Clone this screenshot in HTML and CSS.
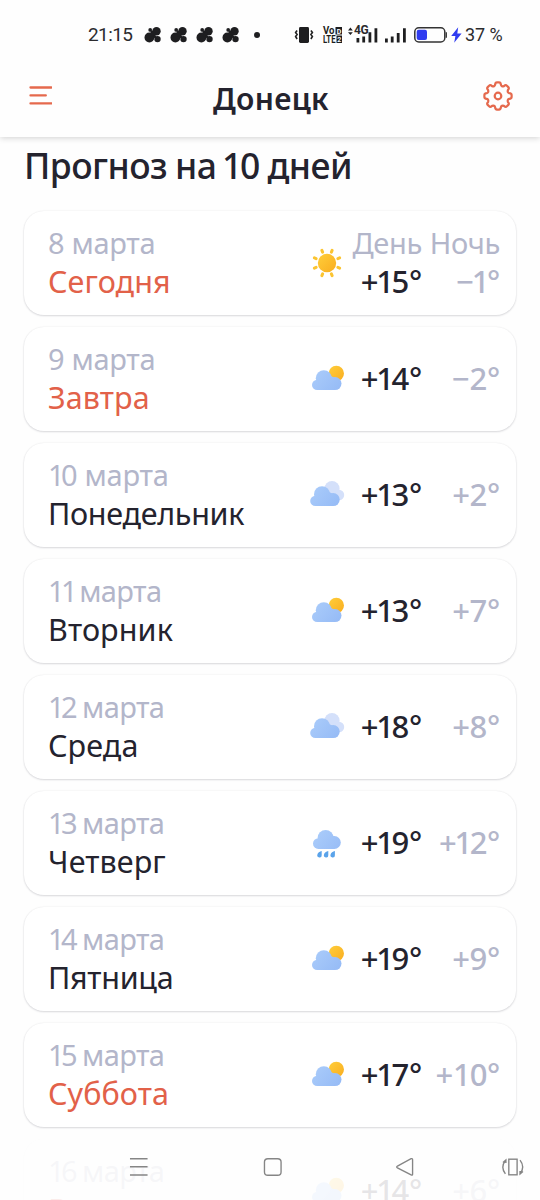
FILE: index.html
```
<!DOCTYPE html>
<html lang="ru">
<head>
<meta charset="utf-8">
<title>Донецк</title>
<link rel="stylesheet" href="styles.css">
</head>
<body>
<svg class="defs" width="0" height="0" aria-hidden="true">
  <defs>
    <linearGradient id="sunFill" x1="0" y1="0" x2="1" y2="1"><stop offset="0" stop-color="#ffce3a"/><stop offset="1" stop-color="#f9ad20"/></linearGradient>
    <linearGradient id="cloudFill" gradientUnits="userSpaceOnUse" x1="8" y1="12" x2="30" y2="31"><stop offset="0" stop-color="#a9cbfa"/><stop offset="1" stop-color="#97bcf6"/></linearGradient>
    <g id="cloudShape" fill="url(#cloudFill)">
      <circle cx="16.800" cy="19.200" r="8"/><circle cx="10.200" cy="25.900" r="5.200"/><circle cx="28" cy="24.600" r="6.500"/><path d="M10.200 20.700L24 17l4 2v12.100H10.200z"/>
    </g>
    <symbol id="sun" viewBox="0 0 40 40">
      <circle cx="20" cy="20" r="9.2" fill="url(#sunFill)"/>
      <g stroke="#fbc431" stroke-width="3" stroke-linecap="round">
        <path d="M15.600 9.100l-.7-1.700M24.400 9.100l.7-1.700M30.900 15.600l1.700-.7M30.900 24.400l1.700.7M24.400 30.900l.7 1.700M15.600 30.900l-.7 1.700M9.100 24.400l-1.700.7M9.100 15.600l-1.700-.7"/>
      </g>
    </symbol>
    <symbol id="partly" viewBox="0 0 40 40">
      <circle cx="29.300" cy="14.500" r="7.700" fill="url(#sunFill)"/>
      <use href="#cloudShape"/>
    </symbol>
    <symbol id="cloudy" viewBox="0 0 40 40">
      <g fill="#d4e0fa"><circle cx="25" cy="13.600" r="7.600"/><circle cx="32" cy="20" r="5.200"/></g>
      <use href="#cloudShape" x="-1.800"/>
    </symbol>
    <symbol id="rain" viewBox="0 0 40 40">
      <g fill="url(#cloudFill)"><circle cx="18.600" cy="15" r="8"/><circle cx="11.300" cy="20.600" r="5.300"/><circle cx="27.300" cy="19.500" r="6.500"/><path d="M11.300 15.300L27.300 13V26h-16z"/></g>
      <g fill="#5aa3ea"><path id="drop" d="M14.700 28v4.200a2.200 2.200 0 1 1-4.300-.6c.3-1.900 2.300-3 4.300-3.600z"/><use href="#drop" x="6.600"/><use href="#drop" x="13.200"/></g>
    </symbol>
    <symbol id="paws" viewBox="0 0 16 16">
      <circle cx="4.900" cy="10.500" r="4.900"/><circle cx="12" cy="4.200" r="4.200"/><circle cx="13" cy="12.100" r="3.200"/><circle cx="5.700" cy="2.900" r="1.900"/><circle cx="7.500" cy="5" r="1.600"/><circle cx="8.800" cy="7.200" r="2.200"/><circle cx="10.200" cy="9.500" r="1.600"/>
    </symbol>
  </defs>
</svg>

<div class="screen">
  <div class="status">
    <span class="clock">21:15</span>
    <span class="notes">
      <svg width="17" height="16"><use href="#paws" width="17" height="16"/></svg>
      <svg width="17" height="16"><use href="#paws" width="17" height="16"/></svg>
      <svg width="17" height="16"><use href="#paws" width="17" height="16"/></svg>
      <svg width="17" height="16"><use href="#paws" width="17" height="16"/></svg>
      <i class="dot"></i>
    </span>
    <svg class="vibrate" width="20" height="18" viewBox="0 0 20 18"><rect x="5" y="1" width="10" height="16" rx="1.4"/><path d="M3.100 4.500L1.600 6.500l1.500 2-1.500 2 1.500 2.500M16.900 4.500l1.500 2-1.500 2 1.500 2-1.500 2.500" fill="none" stroke="#222" stroke-width="1.600"/></svg>
    <svg class="volte" width="20" height="20" viewBox="0 0 20 20">
      <path d="M12.500 2h6.500v7.500h-6.500zM13.500 10.500h5.500V18h-5.500z"/>
      <text x="0" y="9.300" textLength="11.500" lengthAdjust="spacingAndGlyphs">Vo</text>
      <text x="13.700" y="8.600" class="cut">D</text>
      <text x="0" y="18" textLength="12.500" lengthAdjust="spacingAndGlyphs">LTE</text>
      <text x="14.200" y="17.200" class="cut">2</text>
    </svg>
    <span class="mobile">
      <svg width="31" height="18" viewBox="0 0 31 18"><path d="M0 4.400L2.400 1.600 4.800 4.400zM0 6.300h4.800L2.400 9z"/><path d="M8.500 12h2.800v4.500H8.500zM14.300 10.500h2.800v6h-2.800zM20.500 6.200h2.800v10.300h-2.800zM26.500 2.200h2.800v14.300h-2.800z"/></svg>
      <span class="gen">4G</span>
    </span>
    <svg class="bars" width="22" height="18" viewBox="0 0 22 18"><path d="M0 12.500h2.800v4H0zM5.800 10.500h2.800v6H5.800zM11.800 7h2.800v9.500h-2.800zM18 2.200h2.800v14.300H18z"/></svg>
    <svg class="battery" width="34" height="16" viewBox="0 0 34 16"><rect x=".8" y=".8" width="30" height="14.200" rx="4" fill="none" stroke="#333" stroke-width="1.500"/><path d="M32.300 5.200v5.600" stroke="#333" stroke-width="1.300"/><rect x="2.700" y="2.700" width="10.300" height="10.400" rx="2" fill="#303cf0"/></svg>
    <svg class="bolt" width="11" height="16" viewBox="0 0 11 16"><path d="M7.200.2L.2 9h4.200L3.200 15.800l7.400-9.300H6.300z" fill="#303cf0"/></svg>
    <span class="percent">37 %</span>
  </div>

  <header class="bar">
    <svg width="24" height="20" viewBox="0 0 24 20"><path d="M2.500 1.500h21M2.500 9.400h15.300M2.500 17.400h21" stroke="#e5694d" stroke-width="2.300" stroke-linecap="round"/></svg>
    <h1>Донецк</h1>
    <svg width="32" height="32" viewBox="-16 -16 32 32" fill="none" stroke="#e5694d" stroke-width="2.200" stroke-linejoin="round"><circle r="3.300"/><path d="M-2.900-11.200Q-2.700-13.600-1-13.600H1Q2.700-13.600 2.900-11.200Q3.400-9.200 5.900-9.900Q7.700-11.500 8.900-10.300L10.300-8.900Q11.500-7.700 9.900-5.900Q9.200-3.400 11.200-2.900Q13.600-2.700 13.600-1V1Q13.600 2.700 11.200 2.900Q9.200 3.400 9.900 5.900Q11.500 7.700 10.300 8.900L8.900 10.300Q7.700 11.500 5.900 9.900Q3.400 9.200 2.900 11.200Q2.700 13.600 1 13.600H-1Q-2.700 13.600-2.900 11.200Q-3.400 9.200-5.900 9.900Q-7.700 11.500-8.900 10.300L-10.300 8.900Q-11.500 7.700-9.900 5.900Q-9.200 3.400-11.200 2.900Q-13.600 2.700-13.600 1V-1Q-13.600-2.700-11.200-2.900Q-9.200-3.400-9.900-5.900Q-11.500-7.700-10.300-8.900L-8.900-10.300Q-7.700-11.500-5.900-9.900Q-3.400-9.200-2.900-11.200Z"/></svg>
  </header>

  <main class="forecast">
    <h2>Прогноз на <span class="one">1</span>0 дней</h2>
    <article class="card">
      <div class="when"><span class="date">8 марта</span><span class="day accent">Сегодня</span></div>
      <svg class="icon"><use href="#sun"/></svg>
      <div class="col"><span class="label">День</span><span class="temp">+<span class="one">1</span>5°</span></div>
      <div class="col night"><span class="label">Ночь</span><span class="temp">−<span class="one">1</span>°</span></div>
    </article>
    <article class="card">
      <div class="when"><span class="date">9 марта</span><span class="day accent">Завтра</span></div>
      <svg class="icon"><use href="#partly"/></svg>
      <div class="col"><span class="temp">+<span class="one">1</span>4°</span></div>
      <div class="col night"><span class="temp">−2°</span></div>
    </article>
    <article class="card">
      <div class="when"><span class="date"><span class="one">1</span>0 марта</span><span class="day snug">Понедельник</span></div>
      <svg class="icon"><use href="#cloudy"/></svg>
      <div class="col"><span class="temp">+<span class="one">1</span>3°</span></div>
      <div class="col night"><span class="temp">+2°</span></div>
    </article>
    <article class="card">
      <div class="when"><span class="date narrow"><span class="one">11</span> марта</span><span class="day">Вторник</span></div>
      <svg class="icon"><use href="#partly"/></svg>
      <div class="col"><span class="temp">+<span class="one">1</span>3°</span></div>
      <div class="col night"><span class="temp">+7°</span></div>
    </article>
    <article class="card">
      <div class="when"><span class="date narrow"><span class="one">1</span>2 марта</span><span class="day">Среда</span></div>
      <svg class="icon"><use href="#cloudy"/></svg>
      <div class="col"><span class="temp">+<span class="one">1</span>8°</span></div>
      <div class="col night"><span class="temp">+8°</span></div>
    </article>
    <article class="card">
      <div class="when"><span class="date narrow"><span class="one">1</span>3 марта</span><span class="day">Четверг</span></div>
      <svg class="icon"><use href="#rain"/></svg>
      <div class="col"><span class="temp">+<span class="one">1</span>9°</span></div>
      <div class="col night"><span class="temp">+<span class="one">1</span>2°</span></div>
    </article>
    <article class="card">
      <div class="when"><span class="date narrow"><span class="one">1</span>4 марта</span><span class="day snug">Пятница</span></div>
      <svg class="icon"><use href="#partly"/></svg>
      <div class="col"><span class="temp">+<span class="one">1</span>9°</span></div>
      <div class="col night"><span class="temp">+9°</span></div>
    </article>
    <article class="card">
      <div class="when"><span class="date narrow"><span class="one">1</span>5 марта</span><span class="day accent">Суббота</span></div>
      <svg class="icon"><use href="#partly"/></svg>
      <div class="col"><span class="temp">+<span class="one">1</span>7°</span></div>
      <div class="col night"><span class="temp">+<span class="one loose">1</span>0°</span></div>
    </article>
    <article class="card">
      <div class="when"><span class="date narrow"><span class="one">1</span>6 марта</span><span class="day accent">Воскресенье</span></div>
      <svg class="icon"><use href="#partly"/></svg>
      <div class="col"><span class="temp">+<span class="one">1</span>4°</span></div>
      <div class="col night"><span class="temp">+6°</span></div>
    </article>
  </main>

  <nav class="system">
    <svg width="20" height="20" viewBox="0 0 20 20"><path d="M1 1.500h18M1 9.800h18M1 18.200h18"/></svg>
    <svg width="20" height="20" viewBox="0 0 20 20"><rect x="1.500" y="1.500" width="17" height="17" rx="3.500"/></svg>
    <svg width="20" height="20" viewBox="0 0 20 20"><path d="M2.500 9L16.500 1.500Q18 1 18 2.500V17.500Q18 18.800 16.500 18L2.500 11Q1 10 2.500 9Z"/></svg>
    <svg width="24" height="20" viewBox="0 0 24 20"><rect x="8" y="2" width="8.500" height="16"/><path d="M5 3Q-1 10 4.500 17M2 5.300L5 2.800V6M19.500 3Q25 10 19.500 17M22.500 14.700L19.500 17.200V14"/></svg>
  </nav>
</div>
</body>
</html>
```
FILE: styles.css
```
body {
  margin: 0;
  background: #fefefe;
  color: #24232e;
  font-family: "Noto Sans", "Open Sans", sans-serif;
}

.defs { position: absolute; }

.screen {
  position: relative;
  display: flex;
  flex-direction: column;
  width: 540px;
  height: 1200px;
  overflow: hidden;
}

.status {
  position: relative;
  z-index: 2;
  display: flex;
  align-items: center;
  flex: none;
  height: 69px;
  padding-left: 88px;
  box-sizing: border-box;
  background: #fefefe;
  font-family: Roboto, sans-serif;
  font-size: 19px;
  color: #2b2b2e;
  fill: #1e1e20;
}

.clock { width: 56px; letter-spacing: -0.6px; }
.notes { display: flex; align-items: center; gap: 9px; width: 150px; }
.dot { width: 6px; height: 6px; margin-left: 6px; border-radius: 50%; background: #1e1e20; }
.vibrate { margin-right: 9px; }

.volte { margin-right: 5px; font: 700 10px Roboto, sans-serif; overflow: visible; }
.volte .cut { fill: #fff; font-size: 7px; }

.mobile { position: relative; display: flex; width: 37px; }
.gen { position: absolute; left: 6px; top: -3px; font: 700 12px/14px Roboto, sans-serif; letter-spacing: -0.5px; }
.bars { margin-right: 7px; }
.battery { margin-right: 3px; }
.bolt { margin-right: 3px; }
.percent { font-size: 18px; letter-spacing: -0.1px; }

.bar {
  position: relative;
  z-index: 1;
  display: flex;
  align-items: center;
  justify-content: space-between;
  flex: none;
  height: 68px;
  padding: 0 26px 0 28px;
  box-sizing: border-box;
  background: #fefefe;
  box-shadow: 0 1px 6px rgba(0, 0, 0, 0.18);
}
.bar svg { margin-bottom: 15px; }
.bar h1 {
  margin: 0 0 9px 8px;
  font-size: 30px;
  line-height: 40px;
  font-weight: 560;
  letter-spacing: 0.3px;
}

.forecast {
  display: flex;
  flex-direction: column;
  gap: 12px;
  padding: 4px 24px 0;
}
.forecast h2 {
  margin: 0 0 10px;
  height: 48px;
  font-size: 35.500px;
  line-height: 48px;
  font-weight: 550;
  letter-spacing: -0.5px;
  word-spacing: -1px;
  white-space: nowrap;
}

.card {
  display: grid;
  grid-template-columns: 1fr 40px 75px 78px;
  align-items: center;
  flex: none;
  height: 104px;
  padding: 0 16px 0 25px;
  box-sizing: border-box;
  border-radius: 20px;
  background: #fff;
  box-shadow: 0 0 2px rgba(20, 20, 40, 0.08), 0 1px 2px rgba(20, 20, 40, 0.14);
}
.when, .col { display: flex; flex-direction: column; line-height: 38px; padding-bottom: 2px; }
.date, .label { color: #b3b6ca; font-size: 29px; letter-spacing: -0.3px; }
.date { margin-left: -1px; }
.narrow { letter-spacing: -0.6px; word-spacing: -2px; }
.day { margin-left: -1px; font-size: 30.500px; letter-spacing: 0.1px; }
.snug { letter-spacing: -0.3px; }
.accent { color: #e26149; }
.icon { width: 40px; height: 40px; }
.col { align-items: flex-end; white-space: nowrap; }
.temp { font-size: 31px; font-weight: 550; letter-spacing: -0.2px; }
.night .temp { color: #b3b6ca; font-weight: 500; letter-spacing: -0.3px; }

/* The narrow figure one sits closer to its neighbours */
.one { margin-left: -2px; letter-spacing: -2.500px; }
.date .one { margin-left: 0; letter-spacing: -3.500px; }
.night .temp .one { letter-spacing: -2.500px; }
.night .temp .loose { margin-left: 0; letter-spacing: -1px; }

.system {
  position: absolute;
  left: 0;
  right: 0;
  bottom: 0;
  z-index: 3;
  display: flex;
  align-items: flex-start;
  height: 68px;
  padding: 25px 16px 0 129px;
  box-sizing: border-box;
  background: rgba(254, 254, 254, 0.89);
  fill: none;
  stroke: #858585;
  stroke-width: 1.400;
}
.system svg:nth-child(2) { margin-left: 114px; }
.system svg:nth-child(3) { margin-left: 113px; }
.system svg:nth-child(4) { margin-left: 86px; }
```
